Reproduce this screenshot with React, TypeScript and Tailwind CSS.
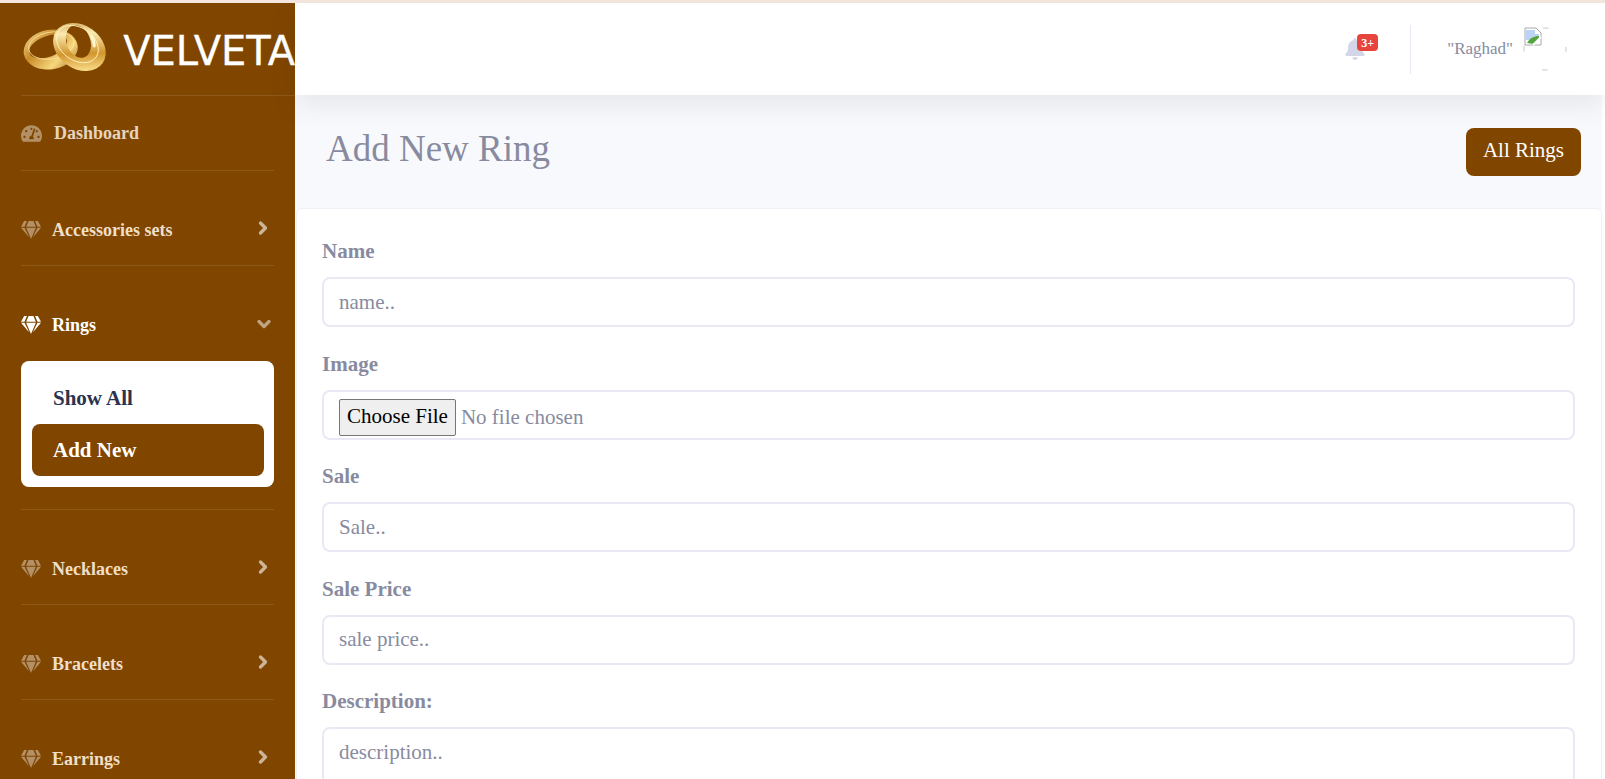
import React from 'react';
import { ChevronDown, ChevronRight } from 'lucide-react';
import { FaBell, FaGem, FaTachometerAlt } from 'react-icons/fa';

const NAV_TOP = [{ label: 'Accessories sets' }];
const NAV_BOTTOM = [{ label: 'Necklaces' }, { label: 'Bracelets' }, { label: 'Earrings' }];
const FIELDS_BEFORE = { label: 'Name', placeholder: 'name..' };
const FIELDS_AFTER = [
  { label: 'Sale', placeholder: 'Sale..' },
  { label: 'Sale Price', placeholder: 'sale price..' },
];

const inputCls =
  'block w-full h-[50px] px-[15px] bg-white border-2 border-[#e8e9f4] rounded-[8px] text-[21px] text-[#888b9f] placeholder:text-[#888b9f] outline-none';
const labelCls = 'block h-[23px] leading-[25px] mb-[15px] text-[21px] font-bold text-[#888b9f]';

const RingsLogo = () => (
  <svg width="88" height="54" viewBox="0 0 88 54" fill="none">
    <defs>
      <linearGradient id="goldA" x1="0" y1="0" x2="1" y2="1">
        <stop offset="0" stopColor="#f8e3a0" />
        <stop offset="0.35" stopColor="#c98a28" />
        <stop offset="0.7" stopColor="#f7d77e" />
        <stop offset="1" stopColor="#a96f1a" />
      </linearGradient>
      <linearGradient id="goldB" x1="0" y1="0" x2="1" y2="1">
        <stop offset="0" stopColor="#b97d20" />
        <stop offset="0.3" stopColor="#fbeab0" />
        <stop offset="0.6" stopColor="#d2962e" />
        <stop offset="0.85" stopColor="#f8dc88" />
        <stop offset="1" stopColor="#96601a" />
      </linearGradient>
      <mask id="holeA">
        <rect width="88" height="54" fill="#fff" />
        <ellipse cx="28" cy="24" rx="20" ry="10.5" transform="rotate(-10 28 24)" fill="#000" />
      </mask>
      <mask id="holeB">
        <rect width="88" height="54" fill="#fff" />
        <ellipse cx="55" cy="21" rx="17" ry="12" transform="rotate(35 55 21)" fill="#000" />
      </mask>
    </defs>
    <ellipse cx="30" cy="27.5" rx="27.5" ry="20" transform="rotate(-10 30 27.5)" fill="url(#goldA)" mask="url(#holeA)" />
    <ellipse cx="30.5" cy="23.5" rx="23" ry="13.5" transform="rotate(-10 30.5 23.5)" stroke="#fbe6a2" strokeWidth="0.8" />
    <ellipse cx="59" cy="25" rx="28.5" ry="22" transform="rotate(35 59 25)" fill="url(#goldB)" mask="url(#holeB)" />
    <ellipse cx="57" cy="22" rx="23" ry="16.5" transform="rotate(35 57 22)" stroke="#fff0bd" strokeWidth="0.9" />
    <path d="M71 14c2 3 3 6 3 10" stroke="#fff6d0" strokeWidth="3" strokeLinecap="round" />
  </svg>
);

const BrokenAvatar = () => (
  <svg width="44" height="44" viewBox="0 0 44 44" fill="none">
    <circle cx="22" cy="22" r="21" stroke="#c9c9c9" strokeWidth="1" strokeDasharray="6 27" strokeDashoffset="3" />
    <path d="M2 1h11l5 5v12H2z" fill="#fff" stroke="#a9a9a9" strokeWidth="1" />
    <path d="M3 3h9v4h4v6H3z" fill="#bcd3f5" />
    <path d="M4 16c3-5 7-7 12-7v3l-5 5z" fill="#52a63c" />
    <path d="M10 18l8-8" stroke="#fff" strokeWidth="2" />
  </svg>
);

const NavItem = ({ label, open }: { label: string; open?: boolean }) => (
  <div className={`flex items-center h-[95px] pt-[23px] ${open ? '' : 'border-b border-white/10'}`}>
    <FaGem className={`w-[20px] h-[20px] ${open ? 'text-white' : 'text-white/40'}`} />
    <span className={`ml-[11px] text-[18px] font-bold ${open ? 'text-white' : 'pt-[2px] text-[#f0dfc8]'}`}>{label}</span>
    {open ? (
      <ChevronDown size={20} strokeWidth={4} className="ml-auto mb-[2px] text-white/50" />
    ) : (
      <ChevronRight size={20} strokeWidth={4} className="ml-auto mr-px mb-[4px] text-white/60" />
    )}
  </div>
);

const Field = ({ label, placeholder }: { label: string; placeholder: string }) => (
  <div className="mb-[24.5px]">
    <label className={labelCls}>{label}</label>
    <input className={inputCls} placeholder={placeholder} />
  </div>
);

export default function App() {
  return (
    <div className="h-[779px] overflow-hidden bg-white font-['Liberation_Serif',serif]">
      <div className="h-[3px] bg-[#f5e6df]" />
      <div className="flex h-[776px]">
        {/* sidebar */}
        <aside className="w-[295px] shrink-0 bg-[#804600] px-[21px] overflow-hidden">
          <div className="flex items-center h-[93px] border-b border-white/10 -mr-[21px] whitespace-nowrap">
            <RingsLogo />
            <span className="ml-[15px] pt-[4px] text-[40px] text-white [-webkit-text-stroke:0.3px_white] font-['DejaVu_Sans',sans-serif]">
              VELVETA
            </span>
          </div>
          <div className="flex items-center h-[75px] border-b border-white/10">
            <FaTachometerAlt className="w-[21px] h-[21px] text-white/40" />
            <span className="ml-[12px] text-[18px] font-bold text-[#e6d4bf]">Dashboard</span>
          </div>
          {NAV_TOP.map((n) => (
            <NavItem key={n.label} label={n.label} />
          ))}
          <NavItem label="Rings" open />
          <div className="pb-[22px] border-b border-white/10">
            <div className="bg-white rounded-[8px] h-[126px] pt-[11px] pl-[11px] pr-[10px] text-[21px] font-bold">
              <div className="h-[52px] pl-[21px] pt-[2px] flex items-center text-[#2b3350]">Show All</div>
              <div className="h-[52px] pl-[21px] pt-[2px] flex items-center text-white bg-[#804600] rounded-[8px]">Add New</div>
            </div>
          </div>
          {NAV_BOTTOM.map((n) => (
            <NavItem key={n.label} label={n.label} />
          ))}
        </aside>

        {/* main */}
        <main className="flex-1 min-w-0 flex flex-col">
          <header className="relative z-10 h-[92px] shrink-0 bg-white shadow-[0_10px_30px_rgba(0,0,0,0.08)] flex items-center justify-end">
            <div className="relative w-[22px] h-[22px] mr-[44px]">
              <FaBell className="w-[22px] h-[22px] text-[#d3d6e6]" />
              <span className="absolute -top-[4px] -right-[12px] w-[21px] h-[17px] rounded-[4px] bg-[#e7443e] text-white text-[12px] font-bold flex items-center justify-center">
                3+
              </span>
            </div>
            <div className="w-px h-[49px] bg-[#e8e9f1] mr-[36px]" />
            <span className="text-[17px] text-[#888b9f] mr-[10px]">"Raghad"</span>
            <div className="mr-[38px]">
              <BrokenAvatar />
            </div>
          </header>
          <div className="flex-1 min-h-0 bg-[#f8f9fc] mr-[3px] overflow-hidden">
            <div className="flex items-center justify-between h-[113px] pl-[31px] pr-[21px]">
              <h1 className="text-[37px] pb-[6px] text-[#888b9f] font-normal">Add New Ring</h1>
              <a className="flex items-center justify-center w-[115px] h-[48px] pb-[2px] rounded-[8px] bg-[#804600] text-white text-[21px]">
                All Rings
              </a>
            </div>
            <div className="bg-white border border-[#eef0f6] rounded-[6px] ml-px pt-[30px] pl-[25px] pr-[26px] pb-[20px]">
              <Field {...FIELDS_BEFORE} />
              <div className="mb-[24.5px]">
                <label className={labelCls}>Image</label>
                <input
                  type="file"
                  className={`${inputCls} pt-[7px] file:h-[37px] file:px-[7px] file:mr-[5px] file:bg-[#efefef] file:border file:border-[#767676] file:rounded-[2px] file:text-black`}
                />
              </div>
              {FIELDS_AFTER.map((f) => (
                <Field key={f.label} {...f} />
              ))}
              <div>
                <label className={labelCls}>Description:</label>
                <textarea className={`${inputCls} !h-[120px] py-[8px] resize-none`} placeholder="description.." />
              </div>
            </div>
          </div>
        </main>
      </div>
    </div>
  );
}
